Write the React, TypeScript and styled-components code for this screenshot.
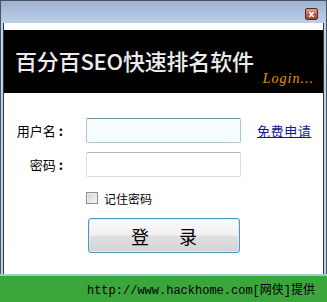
import styled, { createGlobalStyle } from 'styled-components';

const GlobalStyle = createGlobalStyle`
  html, body {
    margin: 0;
    padding: 0;
    background: #ffffff;
  }
  body {
    font-family: "Noto Sans CJK SC", "DejaVu Sans", sans-serif;
  }
`;

export default function App() {
  return (
    <>
      <GlobalStyle />
      <Page>
        <Frame>
          <TitleBar>
            <CloseButton aria-label="关闭">x</CloseButton>
          </TitleBar>
          <Client>
            <Banner>
              <BannerTitle>百分百SEO快速排名软件</BannerTitle>
              <BannerLogin>Login...</BannerLogin>
            </Banner>

            <Form>
              <Row>
                <Label>
                  用户名<Colon>:</Colon>
                </Label>
                <Input $focused />
                <Link href="#">免费申请</Link>
              </Row>
              <Row>
                <Label>
                  密码<Colon>:</Colon>
                </Label>
                <Input type="password" />
              </Row>
              <CheckRow>
                <CheckBox />
                <CheckLabel>记住密码</CheckLabel>
              </CheckRow>
              <LoginButton>
                <span>登</span>
                <span>录</span>
              </LoginButton>
            </Form>
          </Client>
        </Frame>
        <Footer>http://www.hackhome.com[网侠]提供</Footer>
      </Page>
    </>
  );
}

const Page = styled.div`
  width: 327px;
  height: 302px;
  display: flex;
  flex-direction: column;
`;

const Frame = styled.div`
  height: 276px;
  box-sizing: border-box;
  display: flex;
  flex-direction: column;
  border: 1px solid #4a5260;
  border-bottom: none;
  padding: 0 2px 2px;
  background: linear-gradient(#9cb3d1 0px, #bdd1e8 23px, #bcd3e6 100%);
`;

const TitleBar = styled.div`
  height: 22px;
  display: flex;
  justify-content: flex-end;
  align-items: flex-start;
  padding: 7px 6px 0 0;
  box-sizing: border-box;
`;

const CloseButton = styled.div`
  width: 13px;
  height: 12px;
  box-sizing: border-box;
  border: 1px solid #5a2722;
  border-radius: 2px;
  background: linear-gradient(#e2a294, #c0604e 50%, #a84232);
  color: #ffffff;
  font: bold 9px/10px "DejaVu Sans", sans-serif;
  text-align: center;
`;

const Client = styled.div`
  flex: 1;
  background: #ffffff;
  border-left: 1px solid #2c3440;
  border-right: 1px solid #2c3440;
  padding-top: 7px;
  display: flex;
  flex-direction: column;
`;

const Banner = styled.div`
  height: 63px;
  background: #000000;
  display: flex;
  align-items: center;
  padding: 0 9px 0 11px;
`;

const BannerTitle = styled.div`
  color: #ececec;
  font-family: "Noto Sans CJK SC", sans-serif;
  font-size: 22px;
  font-weight: 500;
  letter-spacing: -0.2px;
  margin-top: -4px;
`;

const BannerLogin = styled.div`
  margin-left: auto;
  align-self: flex-end;
  margin-bottom: 6px;
  color: #ee8e18;
  font-family: "Liberation Serif", serif;
  font-style: italic;
  font-size: 14px;
  letter-spacing: 1px;
`;

const Form = styled.div`
  margin-top: 25px;
  display: flex;
  flex-direction: column;
  gap: 9px;
`;

const Row = styled.div`
  display: flex;
  align-items: center;
`;

const Label = styled.div`
  width: 59px;
  margin-right: 23px;
  text-align: right;
  font-size: 13px;
  color: #000000;
`;

const Colon = styled.span`
  margin-left: 3px;
  font-weight: bold;
`;

const Input = styled.input<{ $focused?: boolean }>`
  width: 155px;
  height: 25px;
  box-sizing: border-box;
  margin: 0;
  border: 1px solid ${(p) => (p.$focused ? '#a9c6d6' : '#dcdcdc')};
  border-top-color: ${(p) => (p.$focused ? '#6f8fa0' : '#b4b4b4')};
  border-radius: 2px;
  background: ${(p) => (p.$focused ? '#f7fdff' : '#ffffff')};
  outline: none;
`;

const Link = styled.a`
  margin-left: 16px;
  font-size: 13px;
  letter-spacing: 0.6px;
  color: #16189a;
  text-decoration: underline;
`;

const CheckRow = styled.div`
  margin-top: 6px;
  padding-left: 82px;
  display: flex;
  align-items: center;
  height: 12px;
`;

const CheckBox = styled.div`
  width: 12px;
  height: 12px;
  box-sizing: border-box;
  border: 1px solid #8c8c8c;
  background: linear-gradient(135deg, #d4d4d4, #f6f6f6);
  box-shadow: inset 0 0 0 1px #eeeeee;
`;

const CheckLabel = styled.span`
  margin-left: 6px;
  font-size: 12px;
  color: #000000;
`;

const LoginButton = styled.div`
  margin: 5px 0 0 84px;
  width: 152px;
  height: 35px;
  box-sizing: border-box;
  border: 1px solid #4a96bc;
  border-radius: 3px;
  background: linear-gradient(#fbfbfb, #f0f0f0 48%, #e0e0e0 52%, #d4d4d4);
  box-shadow: inset 0 0 0 1px #d8ecf6;
  display: flex;
  align-items: center;
  justify-content: center;
  gap: 30px;
  font-size: 18px;
  color: #000000;
`;

const Footer = styled.div`
  flex: 1;
  background: #3aa63c;
  border-top: 2px solid #9ccbd6;
  margin-top: -2px;
  display: flex;
  align-items: center;
  justify-content: flex-end;
  padding-right: 12px;
  font-family: "Liberation Mono", "Noto Sans CJK SC", monospace;
  font-size: 12px;
  color: #000000;
`;
